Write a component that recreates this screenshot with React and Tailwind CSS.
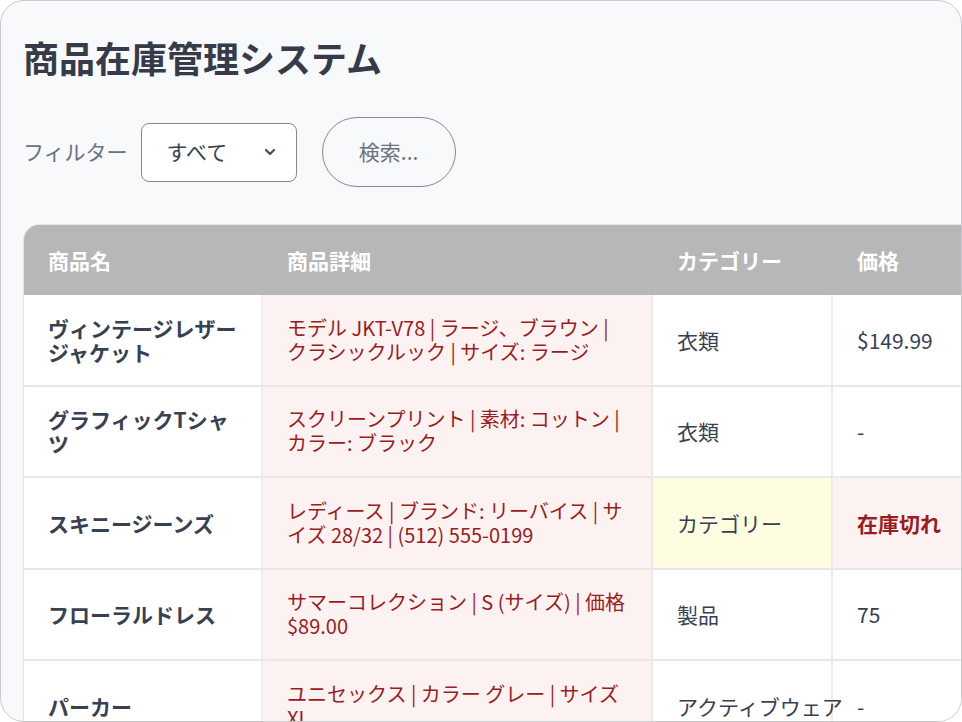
import { useState } from 'react';

const rows = [
  {
    name: 'ヴィンテージレザージャケット',
    detail: 'モデル JKT-V78 | ラージ、ブラウン | クラシックルック | サイズ: ラージ',
    category: '衣類',
    price: '$149.99',
  },
  {
    name: 'グラフィックTシャツ',
    detail: 'スクリーンプリント | 素材: コットン | カラー: ブラック',
    category: '衣類',
    price: '-',
  },
  {
    name: 'スキニージーンズ',
    detail: 'レディース | ブランド: リーバイス | サイズ 28/32 | (512) 555-0199',
    category: 'カテゴリー',
    price: '在庫切れ',
    flagCategory: true,
    soldOut: true,
  },
  {
    name: 'フローラルドレス',
    detail: 'サマーコレクション | S (サイズ) | 価格 $89.00',
    category: '製品',
    price: '75',
  },
  {
    name: 'パーカー',
    detail: 'ユニセックス | カラー グレー | サイズ XL',
    category: 'アクティブウェア',
    price: '-',
  },
];

const cols = 'grid grid-cols-[239px_390px_180px_240px]';

const ChevronDown = () => (
  <svg width="12" height="8" viewBox="0 0 12 8" fill="none">
    <path d="M2 2l4 4 4-4" stroke="#4b5563" strokeWidth="2.4" strokeLinecap="round" strokeLinejoin="round" />
  </svg>
);

export default function App() {
  const [filter] = useState('すべて');

  return (
    <div
      className="w-[962px] h-[722px] overflow-hidden rounded-[24px] border-[1.5px] border-[#c9cacd] bg-[#f8f9fb]"
      style={{ fontFamily: '"Noto Sans CJK JP", "Noto Sans", sans-serif' }}
    >
      <h1 className="pl-[22px] pt-[35px] text-[36px] leading-[43px] font-bold text-[#363b4a]">
        商品在庫管理システム
      </h1>

      <div className="mt-[38px] flex items-center pl-[22px]">
        <span className="text-[21px] text-[#6b7280]">フィルター</span>
        <div className="ml-[13px] flex h-[59px] w-[156px] items-center justify-between rounded-[8px] border-[1.5px] border-[#86888c] bg-white pl-[25px] pr-[20px]">
          <span className="text-[21px] text-[#374151]">{filter}</span>
          <ChevronDown />
        </div>
        <button className="ml-[25px] h-[70px] w-[134px] rounded-full border-[1.5px] border-[#86888c] text-[21px] text-[#6b7280]">
          検索...
        </button>
      </div>

      <div className="ml-[22px] mt-[37px] w-[1049px] overflow-hidden rounded-tl-[16px] border-l border-t border-[#e3e4e8] bg-white">
        <div className={`${cols} bg-[#b7b7b7] text-[21px] leading-[24px] font-bold text-white`}>
          {['商品名', '商品詳細', 'カテゴリー', '価格'].map((h) => (
            <div key={h} className="px-6 py-[23px]">
              {h}
            </div>
          ))}
        </div>

        {rows.map((r) => (
          <div key={r.name} className={`${cols} border-b-2 border-[#e8e8ec] text-[21px] leading-[24px]`}>
            <div className="flex items-center border-r-2 border-[#ececef] px-6 py-[20.75px] font-bold text-[#374151]">
              {r.name}
            </div>
            <div className="flex items-center border-r-2 border-[#eee8ea] bg-[#fdf2f2] px-6 py-[20.75px] text-[20px] text-[#9b1c1c]">
              {r.detail}
            </div>
            <div
              className={`flex items-center whitespace-nowrap border-r-2 border-[#ececef] px-6 py-[20.75px] text-[#374151] ${
                r.flagCategory ? 'bg-[#fefde0]' : ''
              }`}
            >
              {r.category}
            </div>
            <div
              className={`flex items-center px-6 py-[20.75px] ${
                r.soldOut ? 'bg-[#fdf2f2] font-bold text-[#9b1c1c]' : 'text-[#374151]'
              }`}
            >
              {r.price}
            </div>
          </div>
        ))}
      </div>
    </div>
  );
}
